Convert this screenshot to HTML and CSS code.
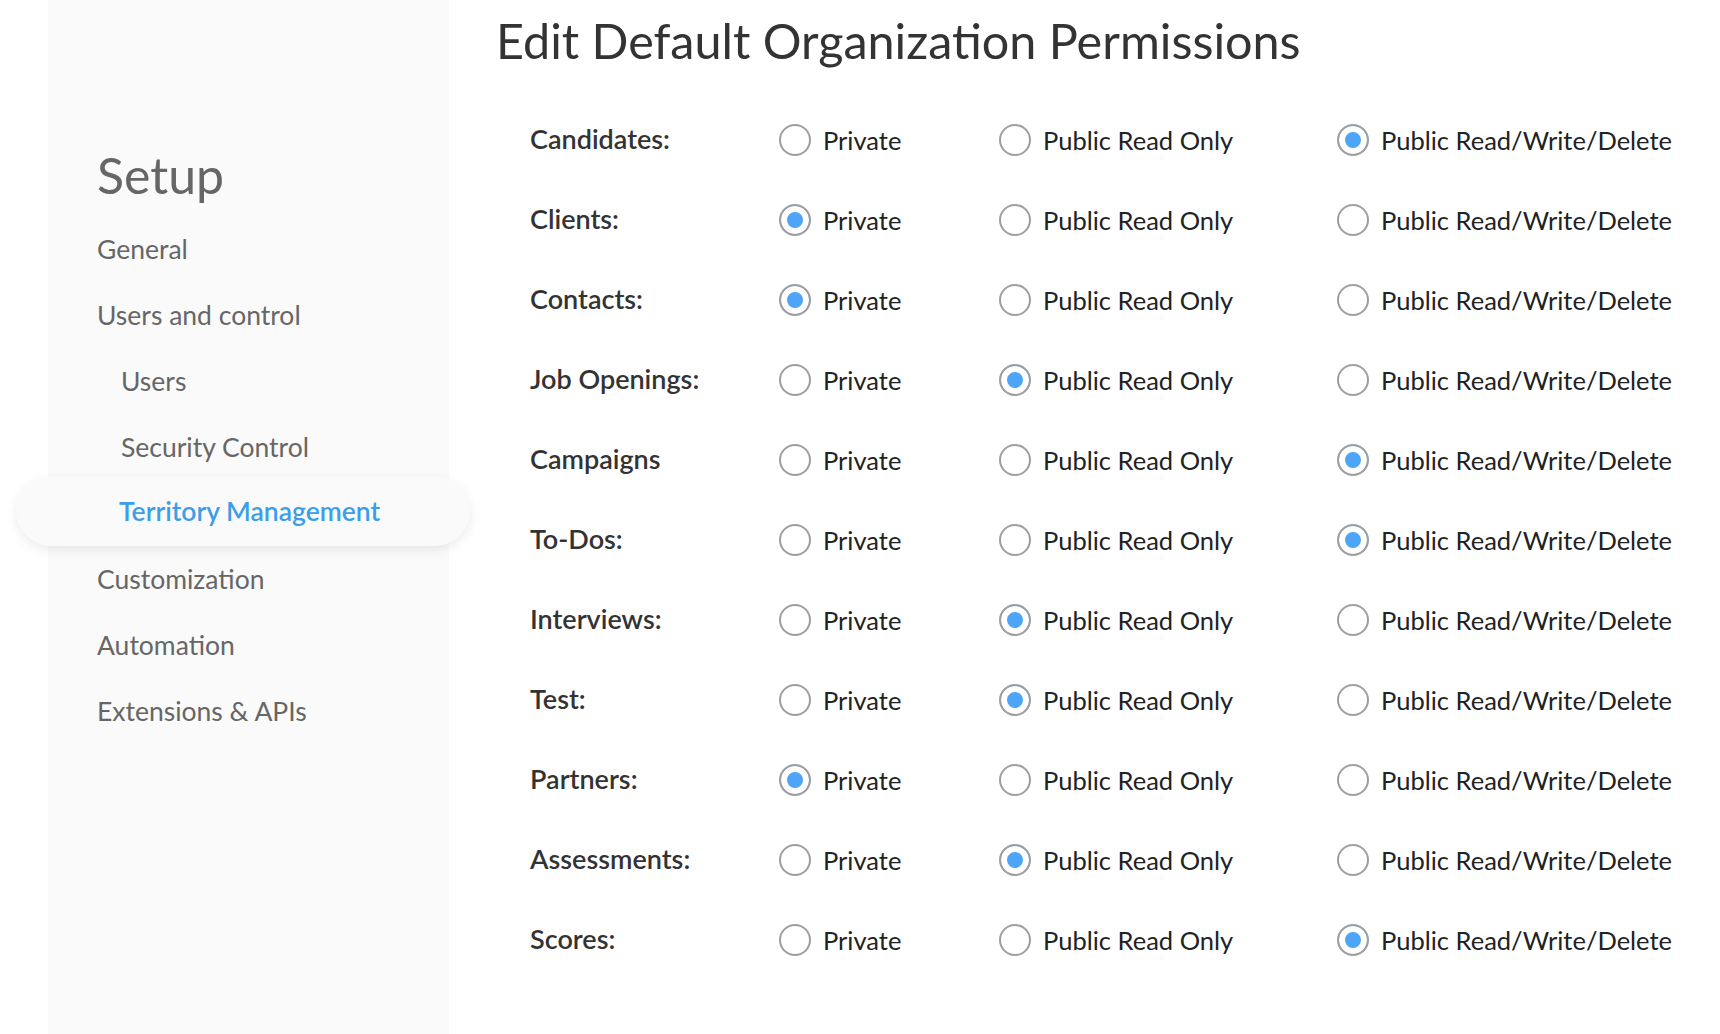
FILE: index.html
```html
<!DOCTYPE html>
<html>
<head>
    <title>Edit Default Organization Permissions</title>
    <link rel="stylesheet" href="styles.css">
</head>
<body>
    <aside class="sidebar">
        <h2 class="sidebar-title">Setup</h2>
        <nav class="nav">
            <a class="nav-item">General</a>
            <a class="nav-item">Users and control</a>
            <a class="nav-item sub">Users</a>
            <a class="nav-item sub">Security Control</a>
            <a class="nav-item sub active">Territory Management</a>
            <a class="nav-item">Customization</a>
            <a class="nav-item">Automation</a>
            <a class="nav-item">Extensions &amp; APIs</a>
        </nav>
    </aside>

    <main class="content">
        <h1 class="page-title">Edit Default Organization Permissions</h1>

        <form class="perms">
            <div class="perm-row">
                <span class="perm-label">Candidates:</span>
                <label class="opt"><input type="radio" name="candidates"> Private</label>
                <label class="opt"><input type="radio" name="candidates"> Public Read Only</label>
                <label class="opt"><input type="radio" name="candidates" checked> Public Read/Write/Delete</label>
            </div>
            <div class="perm-row">
                <span class="perm-label">Clients:</span>
                <label class="opt"><input type="radio" name="clients" checked> Private</label>
                <label class="opt"><input type="radio" name="clients"> Public Read Only</label>
                <label class="opt"><input type="radio" name="clients"> Public Read/Write/Delete</label>
            </div>
            <div class="perm-row">
                <span class="perm-label">Contacts:</span>
                <label class="opt"><input type="radio" name="contacts" checked> Private</label>
                <label class="opt"><input type="radio" name="contacts"> Public Read Only</label>
                <label class="opt"><input type="radio" name="contacts"> Public Read/Write/Delete</label>
            </div>
            <div class="perm-row">
                <span class="perm-label">Job Openings:</span>
                <label class="opt"><input type="radio" name="jobs"> Private</label>
                <label class="opt"><input type="radio" name="jobs" checked> Public Read Only</label>
                <label class="opt"><input type="radio" name="jobs"> Public Read/Write/Delete</label>
            </div>
            <div class="perm-row">
                <span class="perm-label">Campaigns</span>
                <label class="opt"><input type="radio" name="campaigns"> Private</label>
                <label class="opt"><input type="radio" name="campaigns"> Public Read Only</label>
                <label class="opt"><input type="radio" name="campaigns" checked> Public Read/Write/Delete</label>
            </div>
            <div class="perm-row">
                <span class="perm-label">To-Dos:</span>
                <label class="opt"><input type="radio" name="todos"> Private</label>
                <label class="opt"><input type="radio" name="todos"> Public Read Only</label>
                <label class="opt"><input type="radio" name="todos" checked> Public Read/Write/Delete</label>
            </div>
            <div class="perm-row">
                <span class="perm-label">Interviews:</span>
                <label class="opt"><input type="radio" name="interviews"> Private</label>
                <label class="opt"><input type="radio" name="interviews" checked> Public Read Only</label>
                <label class="opt"><input type="radio" name="interviews"> Public Read/Write/Delete</label>
            </div>
            <div class="perm-row">
                <span class="perm-label">Test:</span>
                <label class="opt"><input type="radio" name="test"> Private</label>
                <label class="opt"><input type="radio" name="test" checked> Public Read Only</label>
                <label class="opt"><input type="radio" name="test"> Public Read/Write/Delete</label>
            </div>
            <div class="perm-row">
                <span class="perm-label">Partners:</span>
                <label class="opt"><input type="radio" name="partners" checked> Private</label>
                <label class="opt"><input type="radio" name="partners"> Public Read Only</label>
                <label class="opt"><input type="radio" name="partners"> Public Read/Write/Delete</label>
            </div>
            <div class="perm-row">
                <span class="perm-label">Assessments:</span>
                <label class="opt"><input type="radio" name="assessments"> Private</label>
                <label class="opt"><input type="radio" name="assessments" checked> Public Read Only</label>
                <label class="opt"><input type="radio" name="assessments"> Public Read/Write/Delete</label>
            </div>
            <div class="perm-row">
                <span class="perm-label">Scores:</span>
                <label class="opt"><input type="radio" name="scores"> Private</label>
                <label class="opt"><input type="radio" name="scores"> Public Read Only</label>
                <label class="opt"><input type="radio" name="scores" checked> Public Read/Write/Delete</label>
            </div>
        </form>
    </main>
</body>
</html>
```

FILE: styles.css
```css
body {
    margin: 0;
    display: flex;
    min-height: 100vh;
    background: #fff;
    font-family: 'Lato', 'Open Sans', sans-serif;
    color: #333;
}

/* Sidebar */
.sidebar {
    flex: none;
    width: 352px;
    margin-left: 48px;
    padding: 147px 0 0 49px;
    background: #fafafa;
    box-sizing: content-box;
}
.sidebar-title {
    margin: 0 0 12px;
    font-size: 50px;
    line-height: 57px;
    font-weight: 400;
    color: #666;
}
.nav {
    display: flex;
    flex-direction: column;
}
.nav-item {
    font-size: 26.5px;
    line-height: 66px;
    color: #666;
    cursor: pointer;
}
.nav-item.sub {
    padding-left: 24px;
}
.nav-item.active {
    position: relative;
    z-index: 1;
    margin: -4px -21px 0 -81px;
    padding-left: 103px;
    line-height: 70px;
    border-radius: 35px;
    background: #fafafa;
    box-shadow: 0 4px 12px rgba(0, 0, 0, 0.08);
    color: #3d9ee8;
    font-weight: 600;
}

/* Main */
.content {
    flex: 1;
    padding-left: 47px;
}
.page-title {
    margin: 10px 0 0;
    font-size: 48.5px;
    line-height: 60px;
    font-weight: 400;
    color: #333;
}
.perms {
    display: flex;
    flex-direction: column;
    gap: 48px;
    margin-top: 54px;
    padding-left: 34px;
}
.perm-row {
    display: grid;
    grid-template-columns: 249px 220px 338px auto;
    align-items: center;
    height: 32px;
}
.perm-label {
    align-self: start;
    margin-top: 2px;
    font-size: 27px;
    line-height: 26px;
    font-weight: 600;
    color: #333;
}
.opt {
    display: flex;
    align-items: center;
    gap: 12px;
    font-size: 25.5px;
    line-height: 32px;
    color: #222;
    cursor: pointer;
}
.opt input {
    appearance: none;
    -webkit-appearance: none;
    margin: 0;
    width: 32px;
    height: 32px;
    border: 2px solid #9e9e9e;
    border-radius: 50%;
    background: #fff;
}
.opt input:checked {
    background: #4ea5f7;
    box-shadow: inset 0 0 0 6px #fff;
}
```
